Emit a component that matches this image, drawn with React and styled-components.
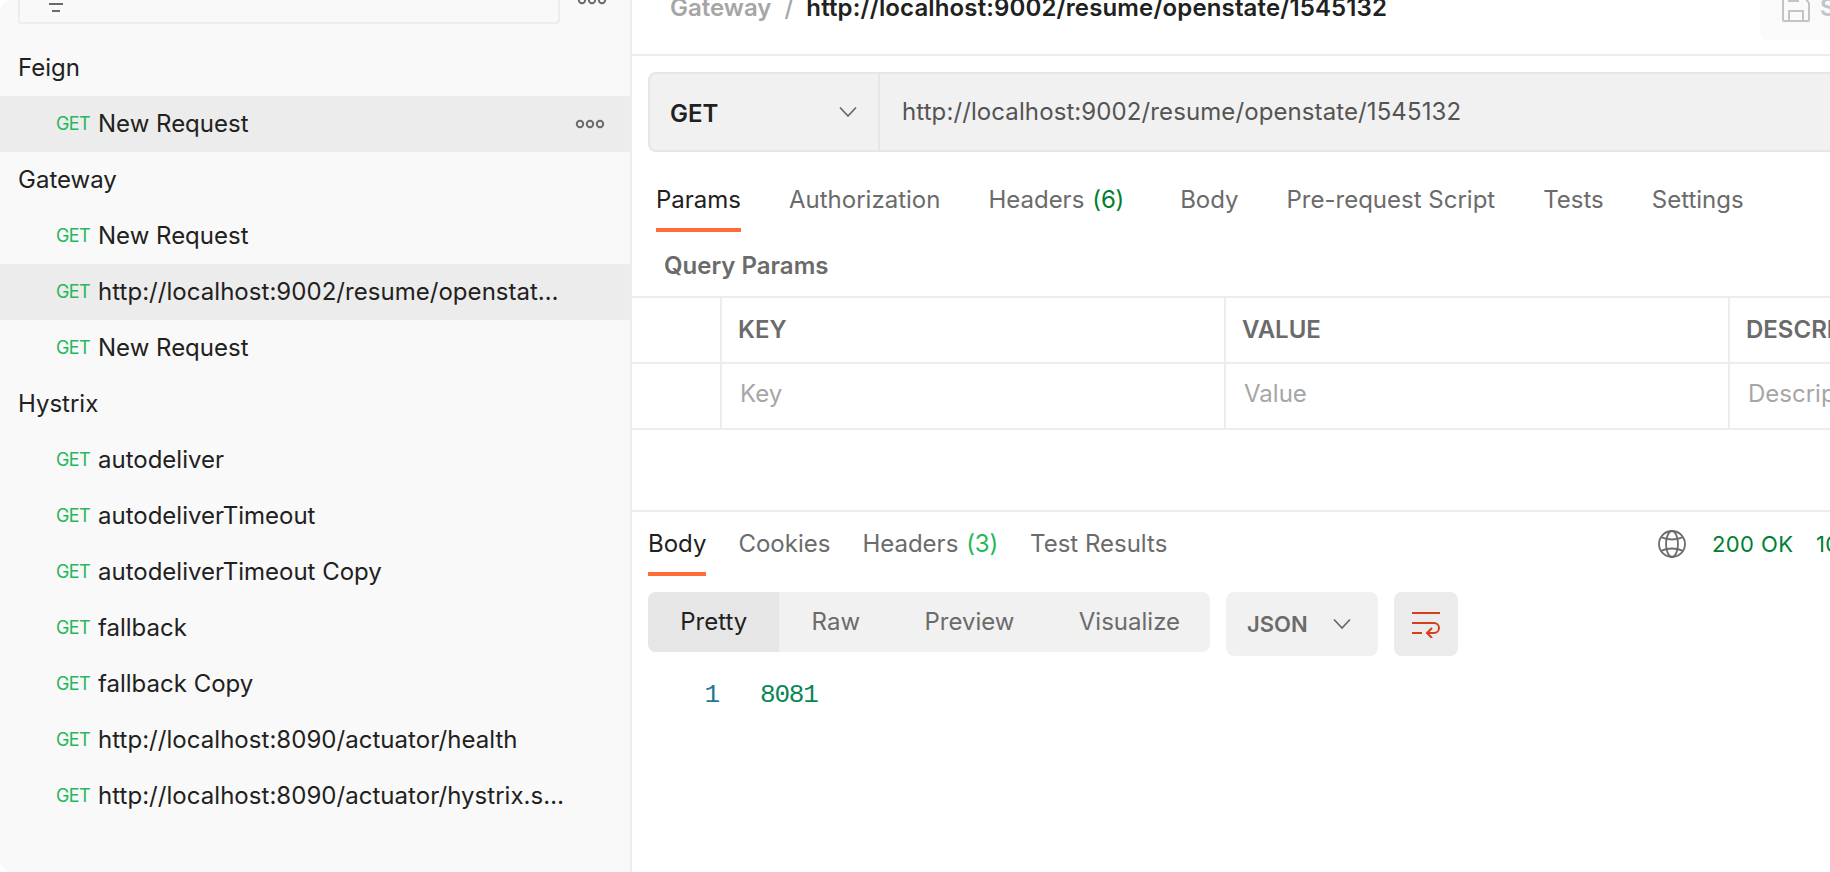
import React, { useState } from 'react';
import styled, { createGlobalStyle } from 'styled-components';

const GlobalStyle = createGlobalStyle`
  * {
    box-sizing: border-box;
  }

  body {
    margin: 0;
    background: #fff;
    overflow: hidden;
    font-family: Inter, "Liberation Sans", sans-serif;
    font-size: 24px;
    color: #212121;
  }

  button {
    border: 0;
    padding: 0;
    background: none;
    font: inherit;
    color: inherit;
  }

  svg {
    display: block;
    flex: none;
  }
`

const Screen = styled.div`
  display: flex;
  width: 100vw;
  height: 100vh;
  overflow: hidden;
`

// Sidebar
const Sidebar = styled.aside`
  flex: 0 0 632px;
  background: #f9f9f9;
  border-right: 2px solid #ededed;
  border-radius: 12px 0 0 12px;
`

const SearchRow = styled.div`
  display: flex;
  align-items: flex-start;
  height: 40px;
  padding-left: 18px;
`

const SearchBox = styled.div`
  width: 542px;
  height: 24px;
  padding-left: 28px;
  border: 2px solid #ededed;
  border-top: 0;
  border-radius: 0 0 4px 4px;
`

const SearchMenu = styled.div`
  margin-left: 17px;
`

const Folder = styled.div`
  height: 56px;
  line-height: 56px;
  padding-left: 18px;
`

const Request = styled.div`
  display: flex;
  align-items: center;
  height: 56px;
  padding: 0 24px 0 56px;
  background: ${props => props.$active ? '#ececec' : 'transparent'};
`

const Method = styled.span`
  width: 42px;
  font-size: 18px;
  line-height: 22px;
  letter-spacing: -0.6px;
  color: #26b759;
`

const RequestName = styled.span`
  width: 468px;
  line-height: 56px;
  letter-spacing: ${props => props.$url ? 0.04 : 0}px;
  white-space: nowrap;
  overflow: hidden;
  text-overflow: ellipsis;
`

const RowMenu = styled.span`
  display: flex;
  margin-left: 9px;
`

// Main pane
const Main = styled.main`
  flex: 1;
  min-width: 0;
  overflow: hidden;
`

const Header = styled.header`
  display: flex;
  align-items: flex-start;
  height: 56px;
  padding-left: 38px;
  border-bottom: 2px solid #ededed;
  font-weight: 600;
  line-height: 15px;
  white-space: nowrap;
`

const Crumb = styled.span`
  color: #a6a6a6;
`

const Slash = styled.span`
  margin: 0 13px;
  font-weight: 500;
  color: #a6a6a6;
`

const RequestTitle = styled.span`
  letter-spacing: 0.13px;
`

const SaveButton = styled.button`
  display: flex;
  flex: none;
  gap: 10px;
  width: 160px;
  height: 40px;
  margin-left: auto;
  margin-right: -90px;
  padding-left: 22px;
  border-radius: 0 0 8px 8px;
  background: #fafafa;
  color: #c4c4c4;
  line-height: 15px;
`

const UrlBar = styled.div`
  display: flex;
  height: 80px;
  margin: 16px -20px 0 16px;
  border: 2px solid #e6e6e6;
  border-radius: 8px;
  background: #f1f1f1;
`

const MethodSelect = styled.div`
  display: flex;
  align-items: center;
  justify-content: space-between;
  width: 230px;
  padding: 3px 21px 0 20px;
  border-right: 2px solid #e6e6e6;
  font-weight: 600;
  line-height: 29px;

  svg {
    margin-bottom: 3px;
  }
`

const UrlText = styled.div`
  padding-left: 22px;
  color: #545454;
  letter-spacing: 0.1px;
  line-height: 75px;
`

const Tabs = styled.nav`
  display: flex;
  gap: ${props => props.$gap}px;
  height: ${props => props.$height}px;
  padding-left: ${props => props.$left}px;
`

const Tab = styled.button`
  display: flex;
  align-items: flex-start;
  height: 100%;
  padding-top: ${props => props.$top}px;
  border-bottom: 4px solid ${props => props.$active ? '#ff6c37' : 'transparent'};
  color: ${props => props.$active ? '#212121' : '#6b6b6b'};
  line-height: 29px;
  white-space: nowrap;
`

const Count = styled.span`
  margin-left: 8px;
  margin-right: ${props => props.$after || 0}px;
  letter-spacing: -0.2px;
  color: ${props => props.$color};
`

const SectionTitle = styled.h2`
  height: 64px;
  margin: 0;
  padding: 19px 0 0 32px;
  font-size: 24px;
  font-weight: 600;
  line-height: 30px;
  color: #6b6b6b;
`

const Table = styled.div`
  border-top: 2px solid #ededed;
`

const TableRow = styled.div`
  display: grid;
  grid-template-columns: 90px 504px 504px 504px;
  height: 66px;
  border-bottom: 2px solid #ededed;
  line-height: ${props => props.$head ? 64 : 60}px;
  font-weight: ${props => props.$head ? 600 : 400};
  color: ${props => props.$head ? '#6b6b6b' : '#a6a6a6'};
`

const Cell = styled.div`
  padding-left: ${props => props.$indent}px;
  border-right: 2px solid #ededed;
`

const Response = styled.section`
  margin-top: 80px;
  border-top: 2px solid #ededed;
`

const ResponseBar = styled.div`
  display: flex;
  justify-content: space-between;
`

const Status = styled.div`
  display: flex;
  flex: none;
  width: 172px;
  padding-top: 18px;
  color: #007f31;
  font-size: 22px;
  line-height: 28px;
  letter-spacing: 0.4px;
  white-space: nowrap;
`

const StatusCode = styled.span`
  flex: none;
  width: 104px;
  margin-left: 26px;
`

const Toolbar = styled.div`
  display: flex;
  align-items: flex-start;
  gap: 16px;
  padding: 16px 0 0 16px;
`

const Segments = styled.div`
  display: flex;
  width: 562px;
  height: 60px;
  border-radius: 8px;
  overflow: hidden;
  background: #f1f1f1;
`

const Segment = styled.button`
  padding: 0 32.2px 2px;
  background: ${props => props.$active ? '#e6e6e6' : 'transparent'};
  color: ${props => props.$active ? '#212121' : '#6b6b6b'};
`

const FormatSelect = styled.button`
  display: flex;
  align-items: center;
  justify-content: space-between;
  width: 152px;
  height: 64px;
  padding: 0 27px 0 21px;
  border-radius: 8px;
  background: #f1f1f1;
  color: #6b6b6b;
  font-size: 22px;
  font-weight: 600;
`

const WrapButton = styled.button`
  display: flex;
  align-items: center;
  justify-content: center;
  width: 64px;
  height: 64px;
  border-radius: 8px;
  background: #ebebeb;
`

const Code = styled.pre`
  display: flex;
  margin: 21px 0 0;
  font-family: "Liberation Mono", monospace;
  font-size: 26px;
  letter-spacing: -1.2px;
  line-height: 36px;
  color: #098658;
`

const LineNumber = styled.span`
  width: 87px;
  margin-right: 41px;
  text-align: right;
  color: #237893;
`

function FilterIcon() {
  return (
    <svg width="16" height="14" viewBox="0 0 16 14" fill="#6b6b6b">
      <path d="M1 3h14v2H1zM4 10h8v2H4z" />
    </svg>
  );
}

function DotsIcon({ y = 6, height = 12 }) {
  return (
    <svg width="30" height={height} fill="none" stroke="#6b6b6b" strokeWidth="2">
      {[5, 15, 25].map(x => <circle key={x} cx={x} cy={y} r="3.2" />)}
    </svg>
  );
}

function Chevron() {
  return (
    <svg width="18" height="12" viewBox="0 0 18 12" fill="none" stroke="#6b6b6b" strokeWidth="1.8">
      <path d="M1 1.5l8 8.5 8-8.5" />
    </svg>
  );
}

function SaveIcon() {
  return (
    <svg width="28" height="22" viewBox="0 0 28 22" fill="none" stroke="#c4c4c4" strokeWidth="2">
      <path d="M1 -6V20q0 1 1 1h24q1 0 1-1V3l-4-5M7 21V11h14v10M7 -4V1h9V-4" />
    </svg>
  );
}

function GlobeIcon() {
  return (
    <svg width="28" height="28" viewBox="0 0 28 28" fill="none" stroke="#6b6b6b" strokeWidth="1.8">
      <circle cx="14" cy="14" r="13" />
      <ellipse cx="14" cy="14" rx="6" ry="13" />
      <path d="M3 7.2Q14 11.8 25 7.2M3 20.8Q14 16.2 25 20.8" />
    </svg>
  );
}

function WrapIcon() {
  return (
    <svg width="28" height="28" viewBox="0 0 28 28" fill="none" stroke="#d63f1c" strokeWidth="2">
      <path d="M0 3h28M0 13h22a5 5 0 0 1 0 10h-6M0 23h10M20 18l-5 5 5 5" />
    </svg>
  );
}

const collections = [
  { name: 'Feign', requests: [{ name: 'New Request', active: true, menu: true }] },
  {
    name: 'Gateway',
    requests: [
      { name: 'New Request' },
      { name: 'http://localhost:9002/resume/openstate/1545132', active: true },
      { name: 'New Request' },
    ],
  },
  {
    name: 'Hystrix',
    requests: [
      { name: 'autodeliver' },
      { name: 'autodeliverTimeout' },
      { name: 'autodeliverTimeout Copy' },
      { name: 'fallback' },
      { name: 'fallback Copy' },
      { name: 'http://localhost:8090/actuator/health' },
      { name: 'http://localhost:8090/actuator/hystrix.stream' },
    ],
  },
];

const requestTabs = ['Params', 'Authorization', 'Headers', 'Body', 'Pre-request Script', 'Tests', 'Settings'];
const responseTabs = ['Body', 'Cookies', 'Headers', 'Test Results'];
const views = ['Pretty', 'Raw', 'Preview', 'Visualize'];

const url = 'http://localhost:9002/resume/openstate/1545132';

function App() {
  const [requestTab, setRequestTab] = useState('Params');
  const [responseTab, setResponseTab] = useState('Body');
  const [view, setView] = useState('Pretty');

  return (
    <Screen>
      <GlobalStyle />
      <Sidebar>
        <SearchRow>
          <SearchBox><FilterIcon /></SearchBox>
          <SearchMenu><DotsIcon y={0} height={6} /></SearchMenu>
        </SearchRow>
        {collections.map(folder => (
          <React.Fragment key={folder.name}>
            <Folder>{folder.name}</Folder>
            {folder.requests.map((request, index) => (
              <Request key={index} $active={request.active}>
                <Method>GET</Method>
                <RequestName $url={request.name.startsWith('http')}>{request.name}</RequestName>
                {request.menu && <RowMenu><DotsIcon /></RowMenu>}
              </Request>
            ))}
          </React.Fragment>
        ))}
      </Sidebar>

      <Main>
        <Header>
          <Crumb>Gateway</Crumb>
          <Slash>/</Slash>
          <RequestTitle>{url}</RequestTitle>
          <SaveButton><SaveIcon />Save</SaveButton>
        </Header>

        <UrlBar>
          <MethodSelect>GET <Chevron /></MethodSelect>
          <UrlText>{url}</UrlText>
        </UrlBar>

        <Tabs $gap={48} $height={80} $left={24}>
          {requestTabs.map(tab => (
            <Tab key={tab} $top={33} $active={tab === requestTab} onClick={() => setRequestTab(tab)}>
              {tab}
              {tab === 'Headers' && <Count $color="#007f31" $after={8}>(6)</Count>}
            </Tab>
          ))}
        </Tabs>

        <SectionTitle>Query Params</SectionTitle>
        <Table>
          <TableRow $head>
            <Cell />
            <Cell $indent={16}>KEY</Cell>
            <Cell $indent={16}>VALUE</Cell>
            <Cell $indent={16}>DESCRIPTION</Cell>
          </TableRow>
          <TableRow>
            <Cell />
            <Cell $indent={18}>Key</Cell>
            <Cell $indent={18}>Value</Cell>
            <Cell $indent={18}>Description</Cell>
          </TableRow>
        </Table>

        <Response>
          <ResponseBar>
            <Tabs $gap={32} $height={64} $left={16}>
              {responseTabs.map(tab => (
                <Tab key={tab} $top={17} $active={tab === responseTab} onClick={() => setResponseTab(tab)}>
                  {tab}
                  {tab === 'Headers' && <Count $color="#26b759">(3)</Count>}
                </Tab>
              ))}
            </Tabs>
            <Status>
              <GlobeIcon />
              <StatusCode>200 OK</StatusCode>
              <span>10 ms</span>
            </Status>
          </ResponseBar>

          <Toolbar>
            <Segments>
              {views.map(name => (
                <Segment key={name} $active={name === view} onClick={() => setView(name)}>{name}</Segment>
              ))}
            </Segments>
            <FormatSelect>JSON <Chevron /></FormatSelect>
            <WrapButton><WrapIcon /></WrapButton>
          </Toolbar>

          <Code><LineNumber>1</LineNumber>8081</Code>
        </Response>
      </Main>
    </Screen>
  );
}

export default App;
